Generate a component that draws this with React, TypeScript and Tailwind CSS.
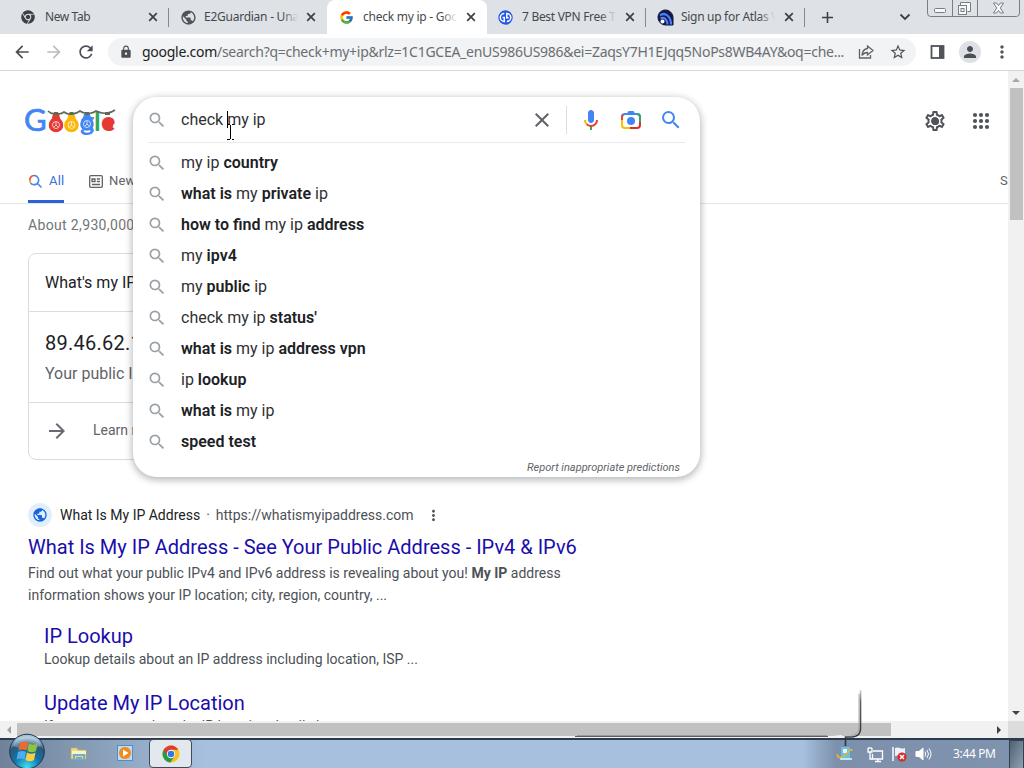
import { ReactNode } from "react";
import { FaChrome } from "react-icons/fa";
import { FcGoogle } from "react-icons/fc";
import {
  MdAdd,
  MdArrowBack,
  MdArrowForward,
  MdLock,
  MdClose,
  MdMoreVert,
  MdOutlineSettings,
  MdPerson,
  MdPublic,
  MdRefresh,
  MdSearch,
  MdStarBorder,
} from "react-icons/md";

type Tab = {
  title: string;
  icon: ReactNode;
  active?: boolean;
  divider?: boolean;
  className: string;
  textClass: string;
};

const VpnIcon = () => (
  <svg width="15" height="15" viewBox="0 0 15 15">
    <circle cx="7.5" cy="7.5" r="7.2" fill="#2457e6" />
    <path
      d="M6.3 3.5a4 4 0 0 0 0 8V7.4H4.6M8.800 11.500a4 4 0 0 0 0-8v4.200h1.800"
      fill="none"
      stroke="#fff"
      strokeWidth="1.5"
    />
  </svg>
);

const AtlasIcon = () => (
  <svg width="17" height="17" viewBox="0 0 17 17">
    <path
      d="M1 8.500C1 4 4.500 1 8.500 1S16 4.500 16 8.500V16H8.500A7.500 7.500 0 0 1 1 8.500z"
      fill="#101a4d"
      stroke="#0c1338"
    />
    <path
      d="M3 6.500c5-4 11 1 11 9M3.500 9.500c4-2 7 1.500 7 6"
      fill="none"
      stroke="#4f7df3"
      strokeWidth="2.200"
    />
    <circle cx="5.500" cy="12.500" r="2" fill="#fff" />
  </svg>
);

const tabs: Tab[] = [
  {
    title: "New Tab",
    icon: <FaChrome size={14} className="text-[#3c4043]" />,
    divider: true,
    className: "w-[169px] pl-[21px]",
    textClass: "tracking-[-0.4px]",
  },
  {
    title: "E2Guardian - Unable",
    icon: <MdPublic size={17} className="text-[#505458]" />,
    className: "w-[158px] pl-[11px]",
    textClass: "tracking-[-0.25px]",
  },
  {
    title: "check my ip - Google",
    icon: <FcGoogle size={15} />,
    active: true,
    className: "w-[160px] pl-3",
    textClass: "tracking-[-0.25px]",
  },
  {
    title: "7 Best VPN Free Trial",
    icon: <VpnIcon />,
    divider: true,
    className: "w-[159px] pl-[11px]",
    textClass: "tracking-[-0.3px]",
  },
  {
    title: "Sign up for Atlas VPN",
    icon: <AtlasIcon />,
    divider: true,
    className: "w-[159px] pl-[11px]",
    textClass: "tracking-[-0.3px]",
  },
];

const TabStrip = () => (
  <div className="relative flex h-[34px] shrink-0 bg-[#dee1e6] font-['Noto_Sans','Open_Sans',sans-serif] text-[12px] text-[#45494d]">
    {tabs.map((tab) => (
      <div
        key={tab.title}
        className={`relative flex shrink-0 items-center ${tab.className} ${
          tab.active ? "rounded-t-lg bg-white" : ""
        }`}
      >
        <span className="flex w-[17px] shrink-0 justify-start">{tab.icon}</span>
        <span
          className={`relative ml-[7px] w-[94px] overflow-hidden whitespace-nowrap ${tab.textClass}`}
        >
          {tab.title}
          <span
            className={`absolute inset-y-0 right-0 w-4 bg-linear-to-r from-transparent ${
              tab.active ? "to-white" : "to-[#dee1e6]"
            }`}
          />
        </span>
        <svg
          width="10"
          height="10"
          viewBox="0 0 10 10"
          className="absolute right-[11px]"
        >
          <path
            d="M1.200 1.200l7.600 7.600M8.800 1.200 1.200 8.800"
            stroke="#3c4043"
            strokeWidth="1.700"
          />
        </svg>
        {tab.divider && (
          <span className="absolute right-0 top-2 h-[19px] w-px bg-[#85898e]" />
        )}
      </div>
    ))}
    <div className="flex w-[45px] items-center justify-center">
      <MdAdd size={19} className="text-[#3c4043]" />
    </div>
    <svg
      width="12"
      height="8"
      viewBox="0 0 12 8"
      className="ml-[49px] mt-[13px]"
    >
      <path
        d="M1.500 1.500 6 6l4.500-4.500"
        fill="none"
        stroke="#3c4043"
        strokeWidth="1.800"
      />
    </svg>
    <svg
      width="93"
      height="17"
      viewBox="0 0 93 17"
      fill="none"
      stroke="#797e85"
      className="absolute right-[4px] top-0"
    >
      <path d="M.5 0v13q0 3.500 3 3.500h86q3 0 3-3.500V0M25.500 0v16M50.500 0v16" />
      <rect x="7.500" y="8.500" width="11" height="4" rx="1" fill="#f7f8f9" />
      <path d="M33.500 5.500v-3h10v9h-3" fill="#f7f8f9" />
      <rect x="31.500" y="5.500" width="8" height="9" fill="#f7f8f9" />
      <rect x="34" y="8.500" width="3" height="3" />
      <path
        d="M66.500 3h3l2 2.500L73.500 3h3l-3.200 5 3.200 5h-3l-2-2.500-2 2.500h-3l3.200-5z"
        fill="#f7f8f9"
      />
    </svg>
  </div>
);

const Toolbar = () => (
  <div className="flex h-[37px] shrink-0 items-center border-b border-[#d6d8da] bg-white">
    <MdArrowBack size={20} className="ml-3 shrink-0 text-[#4b4f54]" />
    <MdArrowForward size={20} className="ml-3 shrink-0 text-[#babcbe]" />
    <MdRefresh size={20} className="ml-3 shrink-0 text-[#4b4f54]" />
    <div className="ml-3 flex h-7 w-[808px] shrink-0 items-center rounded-full bg-[#f1f3f4]">
      <MdLock size={14} className="ml-[11px] shrink-0 text-[#4b4f54]" />
      <div className="-mt-px ml-[9px] w-[706px] shrink-0 whitespace-nowrap font-['Noto_Sans','Open_Sans',sans-serif] text-[14px] tracking-[-0.27px] text-[#6a6e73]">
        <span className="text-[#202124]">google.com</span>
        /search?q=check+my+ip&amp;rlz=1C1GCEA_enUS986US986&amp;ei=ZaqsY7H1EJqq5NoPs8WB4AY&amp;oq=che...
      </div>
      <svg
        width="16"
        height="16"
        viewBox="0 0 16 16"
        fill="none"
        stroke="#5f6368"
        strokeWidth="1.300"
        className="ml-[10px] shrink-0"
      >
        <path d="M1.500 5v9h11v-3" />
        <path d="M9.500 2 15 6.500 9.500 11V8.500C7 8.500 5.500 9 4 11.500 4.200 7.500 6 5 9.500 4.500z" />
      </svg>
      <MdStarBorder size={18} className="ml-[15px] shrink-0 text-[#505458]" />
    </div>
    <svg
      width="16"
      height="14"
      viewBox="0 0 16 14"
      className="ml-[14px] shrink-0 text-[#505458]"
    >
      <rect
        x="1.500"
        y="1"
        width="12"
        height="12"
        fill="none"
        stroke="currentColor"
        strokeWidth="1.800"
      />
      <path d="M9 1h5v12H9z" fill="currentColor" />
    </svg>
    <div className="ml-[13px] flex size-[22px] shrink-0 items-center justify-center rounded-full bg-[#dde0e4]">
      <MdPerson size={18} className="text-[#4b4f54]" />
    </div>
    <MdMoreVert size={20} className="ml-[11px] shrink-0 text-[#505458]" />
  </div>
);

// Holiday logo: light bulbs hang over the round letters
const GoogleLogo = () => (
  <svg
    width="94"
    height="34"
    viewBox="0 0 94 34"
    className="font-['Lato',sans-serif]"
  >
    <g fill="#e53935">
      <circle cx="32" cy="20" r="7.200" />
      <path d="M29 9h6l1.500 6h-9z" />
    </g>
    <g fill="#fbb70b">
      <circle cx="47.500" cy="20" r="7.200" />
      <path d="M44.500 9h6l1.500 6h-9z" />
    </g>
    <g fill="#4285f4">
      <circle cx="63" cy="19" r="6.800" />
      <path d="M60 9h6l1.500 6h-9z" />
    </g>
    <circle cx="84" cy="19" r="5.500" fill="#e53935" />
    <g fontSize="27" fontWeight="700">
      <text x="0" y="26" fontSize="31" fontWeight="400" fill="#4285f4" stroke="#4285f4" strokeWidth="0.700">
        G
      </text>
      <text x="24.200" y="26.500" fill="#e53935">
        o
      </text>
      <text x="39.700" y="26.500" fill="#fbb70b">
        o
      </text>
      <text x="56" y="26" fill="#4285f4">
        g
      </text>
      <text x="70" y="26" fill="#34a853">
        l
      </text>
      <text x="77" y="26" fill="#e53935">
        e
      </text>
    </g>
    <g fill="none" stroke="#fff" strokeOpacity="0.700">
      <circle cx="32" cy="20" r="3.500" />
      <circle cx="47.500" cy="20" r="3.500" />
      <circle cx="63" cy="19" r="3.500" />
      <path d="M32 17v3l-2 2M32 20l2 2M47.500 17v3l-2 2M47.500 20l2 2M63 16v3l-2 2M63 19l2 2" />
    </g>
    <path
      d="M24 6q4 4 8 2q4 2 8-1q4 3 8 2q4 0 8-3q4 3 8 2q4 1 8-2q6 3 11 2q4 0 8-3"
      fill="none"
      stroke="#5c6b57"
      strokeWidth="1.700"
    />
    <path
      d="M30 7h4v3h-4zM45.500 7h4v3h-4zM61 7h4v3h-4zM81 7h5v3h-5z"
      fill="#5c6b57"
    />
  </svg>
);

const ResultHeader = () => (
  <div className="flex h-[98px] shrink-0 items-start">
    <div className="ml-6 mt-[34px]">
      <GoogleLogo />
    </div>
    <div className="relative ml-auto mr-[18px] mt-[38px] flex items-center gap-[25px] text-[#505458]">
      <span className="relative flex size-6 items-center justify-center">
        <MdOutlineSettings size={24} />
        <span className="absolute size-[7px] rounded-full bg-[#505458]" />
      </span>
      <svg width="18" height="18" viewBox="0 0 18 18" fill="currentColor">
        {[3, 9, 15].map((y) =>
          [3, 9, 15].map((x) => <circle key={`${x}${y}`} cx={x} cy={y} r="2.100" />)
        )}
      </svg>
    </div>
  </div>
);

const ResultTabs = () => (
  <div className="flex h-[35px] shrink-0 border-b border-[#e4e6e8] text-[13px] text-[#5f6368]">
    <div className="ml-7 flex w-9 shrink-0 border-b-[3px] border-[#2a63d4] pt-px text-[#3b70d8]">
      <svg
        width="15"
        height="15"
        viewBox="0 0 15 15"
        fill="none"
        strokeWidth="1.600"
        className="mt-[4px] shrink-0"
      >
        <path d="M2.500 8.500A4.500 4.500 0 0 1 6 1.500" stroke="#ea4335" />
        <path d="M2.500 8.500A4.500 4.500 0 0 1 1.500 6" stroke="#fbbc04" />
        <path d="M6 1.500a4.600 4.600 0 1 1-3.500 7.500M9.500 9.500l4 4" stroke="#4285f4" />
      </svg>
      <span className="ml-[6px] leading-[21px] tracking-[0.2px]">All</span>
    </div>
    <div className="ml-[25px] flex">
      <svg
        width="14"
        height="13"
        viewBox="0 0 14 13"
        fill="none"
        stroke="currentColor"
        strokeWidth="1.300"
        className="mt-[6px]"
      >
        <rect x=".7" y=".7" width="12.600" height="11.600" rx="1" />
        <path d="M3 4h3v2.500H3zM7.800 4H11M7.800 6.500H11M3 9.500h8" />
      </svg>
      <span className="ml-[6px] mt-px leading-[22px] tracking-[0.2px]">News</span>
    </div>
    <span className="ml-auto w-[8px] overflow-hidden whitespace-nowrap leading-[23px]">
      SafeSearch
    </span>
  </div>
);

const IpCard = () => (
  <div className="ml-7 flex h-[207px] w-[652px] shrink-0 flex-col rounded-lg border border-[#dadce0] text-[#202124]">
    <div className="flex h-[58px] items-center border-b border-[#dadce0] pl-4 text-[16px]">
      What's my IP
    </div>
    <div className="h-[91px] border-b border-[#dadce0] pl-4 pt-[17px]">
      <div className="text-[20px] leading-7 tracking-[0.25px]">89.46.62.154</div>
      <div className="mt-[5px] text-[16px] leading-6 text-[#5f6368]">
        Your public IP address
      </div>
    </div>
    <div className="flex grow items-center pl-4 text-[14px] text-[#5f6368]">
      <MdArrowForward size={24} className="text-[#676b70]" />
      <span className="-mt-px ml-6 text-[14px]">Learn more about IP addresses</span>
    </div>
  </div>
);

const SearchResult = () => (
  <div className="ml-7 mt-[43px] shrink-0 text-[14px] text-[#4d5156]">
    <div className="flex h-6 items-center">
      <span className="flex size-6 items-center justify-center rounded-full bg-[#e1effc]">
        <MdPublic size={16} className="text-[#1565e0]" />
      </span>
      <span className="ml-2 text-[#202124]">What Is My IP Address</span>
      <span className="mx-[6px]">·</span>
      <span>https://whatismyipaddress.com</span>
      <MdMoreVert size={17} className="ml-[11px]" />
    </div>
    <div className="mt-[7px] text-[20px] leading-[26px] text-[#1a0dab]">
      What Is My IP Address - See Your Public Address - IPv4 &amp; IPv6
    </div>
    <div className="mt-[2px] leading-[22px]">
      Find out what your public IPv4 and IPv6 address is revealing about you!{" "}
      <b>My IP</b> address
      <br />
      information shows your IP location; city, region, country, ...
    </div>
    <div className="ml-4 mt-[17px] text-[20px] leading-[26px] text-[#1a0dab]">
      IP Lookup
    </div>
    <div className="-mt-px ml-4 leading-[22px]">
      Lookup details about an IP address including location, ISP ...
    </div>
    <div className="ml-4 mt-[20px] text-[20px] leading-[26px] text-[#1a0dab]">
      Update My IP Location
    </div>
    <div className="-mt-px ml-4 leading-[22px]">
      If you want to update the IP location details here ...
    </div>
  </div>
);

// Parts between asterisks are the completed words
const suggestions = [
  "my ip *country*",
  "*what is* my *private* ip",
  "*how to find* my ip *address*",
  "my *ipv4*",
  "my *public* ip",
  "check my ip *status'*",
  "*what is* my ip *address vpn*",
  "ip *lookup*",
  "*what is* my ip",
  "*speed test*",
];

const SearchPopup = () => (
  <div className="absolute left-[133px] top-[26px] flex h-[380px] w-[567px] flex-col rounded-3xl bg-white text-[16px] text-[#303134] shadow-[0_2px_7px_1px_rgba(32,33,36,0.32)]">
    <div className="mx-[15px] flex h-[46px] shrink-0 items-center border-b border-[#e8eaed]">
      <MdSearch size={20} className="-ml-px text-[#9aa0a6]" />
      <span className="relative ml-[14px]">
        check my ip
        <span className="absolute left-[46px] top-[3px] h-[17px] w-px bg-black" />
      </span>
      <MdClose size={24} className="ml-auto text-[#5f6368]" />
      <span className="ml-3 h-7 w-px bg-[#dadce0]" />
      <svg width="24" height="24" viewBox="0 0 24 24" className="ml-3">
        <path
          fill="#4285f4"
          d="m12 15c1.660 0 3-1.310 3-2.970v-7.020c0-1.660-1.340-3.010-3-3.010s-3 1.340-3 3.010v7.020c0 1.660 1.340 2.970 3 2.970z"
        />
        <path fill="#34a853" d="m11 18.080h2v3.920h-2z" />
        <path
          fill="#fbbc04"
          d="m7.050 16.870c-1.270-1.330-2.050-2.830-2.050-4.870h2c0 1.450.56 2.420 1.470 3.380v.32l-1.150 1.180z"
        />
        <path
          fill="#ea4335"
          d="m12 16.930a4.970 5.250 0 0 1-3.540-1.550l-1.410 1.490c1.260 1.340 3.020 2.130 4.950 2.130 3.870 0 6.990-2.920 6.990-7h-1.990c0 2.920-2.240 4.930-5 4.930z"
        />
      </svg>
      <svg
        width="24"
        height="24"
        viewBox="0 0 24 24"
        fill="none"
        strokeWidth="2"
        className="ml-4"
      >
        <path d="M3 13V9q0-3 3-3h12q3 0 3 3v3" stroke="#4285f4" />
        <path d="M8 5.500 9.500 3h5L16 5.500z" fill="#4285f4" />
        <path d="M3 12v5q0 3 3 3h6" stroke="#fbbc04" />
        <path d="M3 12V9q0-1.500 1-2.300" stroke="#ea4335" />
        <path d="M11 20h7q3 0 3-3v-3" stroke="#d93025" />
        <path d="M18.500 6Q21 6.500 21 9v5" stroke="#34a853" />
        <circle cx="12" cy="13" r="4" fill="#4285f4" />
      </svg>
      <MdSearch size={24} className="ml-4 mr-[2px] text-[#4285f4]" />
    </div>
    <ul className="mt-[4px]">
      {suggestions.map((s) => (
        <li key={s} className="flex h-[31px] items-center whitespace-pre">
          <MdSearch size={20} className="ml-[14px] mr-[14px] text-[#9aa0a6]" />
          <span>
            {s.split("*").map((part, i) =>
              i % 2 ? (
                <b key={i} className="font-semibold text-[#202124]">
                  {part}
                </b>
              ) : (
                part
              )
            )}
          </span>
        </li>
      ))}
    </ul>
    <div className="mr-5 mt-[3px] text-right text-[11px] italic leading-4 text-[#5f6368]">
      Report inappropriate predictions
    </div>
  </div>
);

const VerticalScroll = () => (
  <div className="flex w-4 shrink-0 flex-col items-center bg-[#f1f1f1]">
    <div className="flex h-[17px] items-center">
      <span className="border-x-[4px] border-b-[4px] border-x-transparent border-b-[#a3a3a3]" />
    </div>
    <div className="h-[132px] w-[13px] bg-[#c1c1c1]" />
    <div className="mt-auto flex h-[17px] items-center">
      <span className="border-x-[4px] border-t-[4px] border-x-transparent border-t-[#404040]" />
    </div>
  </div>
);

const HorizontalScroll = () => (
  <div className="flex h-[17px] shrink-0 items-center bg-[#f1f1f1]">
    <div className="flex w-[17px] justify-center">
      <span className="border-y-[4px] border-r-[4px] border-y-transparent border-r-[#a3a3a3]" />
    </div>
    <div className="h-[13px] w-[874px] bg-[#c1c1c1]" />
    <span className="ml-auto mr-[7px] border-y-[4px] border-l-[4px] border-y-transparent border-l-[#404040]" />
    <div className="h-full w-4 bg-[#dcdcdc]" />
  </div>
);

// Leftover edge of the tray notification balloon
const BalloonShadow = () => (
  <svg
    width="300"
    height="60"
    viewBox="0 0 300 60"
    fill="none"
    className="absolute left-[570px] top-[686px]"
  >
    <defs>
      <linearGradient id="edge" x1="0" y1="0" x2="0" y2="1">
        <stop offset="0" stopColor="#303236" stopOpacity="0.2" />
        <stop offset="0.2" stopColor="#303236" stopOpacity="0.800" />
        <stop offset="1" stopColor="#303236" />
      </linearGradient>
    </defs>
    <path d="M258 51q2-1 14-2v2z" fill="#f1f1f1" />
    <path d="M290.500 4v39q0 7-8 8h-7v13" stroke="url(#edge)" strokeWidth="1.600" />
    <path d="M289 8v33q0 7-8 8.500" stroke="#a8a8a8" />
    <path d="M7 49.500h250" stroke="#9a9a9a" />
    <path d="M5 50.500h253" stroke="#5d5d5d" />
  </svg>
);

const StartButton = () => (
  <svg width="37" height="35" viewBox="0 0 37 35" className="-mt-[7px] ml-2 shrink-0">
    <defs>
      <radialGradient id="orb" cx="50%" cy="95%" r="85%">
        <stop offset="0" stopColor="#3de0f5" />
        <stop offset="0.45" stopColor="#1474a8" />
        <stop offset="0.8" stopColor="#2c5878" />
        <stop offset="1" stopColor="#9fc0d4" />
      </radialGradient>
    </defs>
    <circle cx="19" cy="18.500" r="17.300" fill="url(#orb)" stroke="#173754" />
    <path d="M5 13C9 0 29 0 33 13Q19 19 5 13z" fill="#fff" fillOpacity="0.250" />
    <path d="M12.500 10q4-2.500 7.500 0l-1.500 7.500q-4-2-8 0z" fill="#ef6a2a" />
    <path d="M21 10.500q4 2.500 8.500 0L28 18q-4 2.500-8.500 0z" fill="#8cc63e" />
    <path d="M10 19q4-2 8 0l-1.500 7.500q-4-2-8 0z" fill="#4aaef0" />
    <path d="M19 19.500q4 2.500 8.500 0L26 27q-4 2.500-8.500 0z" fill="#fbd03c" />
  </svg>
);

const ChromeLogo = () => (
  <svg width="18" height="18" viewBox="0 0 18 18">
    <circle cx="9" cy="9" r="8.500" fill="#fbc116" />
    <path d="M9 9 1.640 4.750A8.500 8.500 0 0 0 8.500 17.500L12.600 11z" fill="#259b4a" />
    <path d="M1.640 4.750a8.500 8.500 0 0 1 14.720 0H9L5.400 11z" fill="#dc3d30" />
    <circle cx="9" cy="9" r="4.200" fill="#fff" />
    <circle cx="9" cy="9" r="3.300" fill="#3478e5" />
  </svg>
);

const Taskbar = () => (
  <div className="flex h-[30px] shrink-0 border-t-2 border-[#2a3b50] bg-linear-to-r from-[#6f8299] via-[#a6c0dd] via-20% to-[#a6c0dd]">
    <StartButton />
    <svg width="18" height="16" viewBox="0 0 18 16" className="ml-[25px] mt-[6px]">
      <path d="M1 2h6l1 2h8v9H1z" fill="#ead98a" stroke="#c2ad5c" strokeWidth=".6" />
      <path d="M2 5h14v3H2z" fill="#fbf4c4" />
      <path d="M4 14V9h10v5M7 14v-2h4v2" fill="none" stroke="#70aed0" strokeWidth="2" />
    </svg>
    <svg width="16" height="16" viewBox="0 0 16 16" className="ml-[29px] mt-[5px]">
      <rect x=".5" y=".5" width="15" height="15" fill="#bfdaf2" stroke="#4c8fcf" />
      <circle cx="8" cy="8" r="6" fill="#f18a17" />
      <path d="M6 4.500v7L11.500 8z" fill="#fff" />
    </svg>
    <div className="-mt-px ml-4 flex h-[29px] w-[43px] items-center justify-center rounded-sm border border-[#3d4a59] bg-[#e2e8ee]">
      <ChromeLogo />
    </div>
    <div className="ml-auto flex w-[221px] items-start bg-linear-to-r from-[#a6c0dd] via-[#7c90ac] via-15% to-[#8093ae]">
      <svg width="18" height="16" viewBox="0 0 18 16" className="ml-[33px] mt-[6px]">
        <rect x="5" y="1" width="9" height="13" fill="#65c2e9" />
        <rect x="7" y="3" width="4" height="4" fill="#e8f7fd" />
        <path d="M1 8q1 5 6 3l6-6q3-3 3 0" fill="none" stroke="#e5b33e" strokeWidth="1.700" />
        <path d="M4 13h12" stroke="#e4f2f7" strokeWidth="1.500" />
      </svg>
      <svg
        width="17"
        height="16"
        viewBox="0 0 17 16"
        fill="none"
        stroke="#fff"
        strokeWidth="1.300"
        className="ml-[13px] mt-[7px]"
      >
        <path d="M6 4h9.500v8H5.500V7M8 14.500h6M11 12v2" />
        <path d="M1 1v4h4V1M3 5v7h2M2 0v2M4 0v2" />
      </svg>
      <svg width="17" height="16" viewBox="0 0 17 16" className="ml-[7px] mt-[6px]">
        <path d="M2 1v14" stroke="#fff" strokeWidth="1.500" />
        <path d="M4 2q3-1 5 0t5 0v8q-3 1-5 0t-5 0z" fill="#eef1f5" />
        <circle cx="11" cy="11" r="4.600" fill="#d62b2b" />
        <path d="m9 9 4 4m0-4-4 4" stroke="#fff" strokeWidth="1.500" />
      </svg>
      <svg
        width="17"
        height="16"
        viewBox="0 0 17 16"
        fill="none"
        stroke="#fff"
        className="ml-[7px] mt-[6px]"
      >
        <path d="M1 5.500h3L8 2v12l-4-3.500H1z" fill="#fff" />
        <path d="M10 5.500q1.500 2.500 0 5M12 4q3 4 0 8M14 2.500q4 5.500 0 11" />
      </svg>
      <span className="ml-[21px] mt-[5px] whitespace-nowrap font-['Noto_Sans','Open_Sans',sans-serif] text-[12px] leading-[18px] tracking-[-0.35px] text-white">
        3:44 PM
      </span>
      <div className="ml-auto h-[29px] w-[15px] border border-[#33404f] bg-linear-to-br from-[#526274] to-[#8fa1b5]" />
    </div>
  </div>
);

const TextCursor = () => (
  <svg
    width="9"
    height="16"
    viewBox="0 0 9 16"
    fill="none"
    stroke="#000"
    className="absolute left-[226px] top-[124px]"
    shapeRendering="crispEdges"
  >
    <path d="M1 .5h2.500M5.500.5H8M4.500 1v14M1 15.500h2.500M5.500 15.500H8" />
  </svg>
);

const App: React.FC = () => {
  return (
    <div className="relative flex h-[768px] w-[1024px] flex-col overflow-hidden bg-white font-['Roboto',sans-serif]">
      <TabStrip />
      <Toolbar />
      <div className="flex h-[650px] shrink-0">
        <div className="relative flex w-[1008px] shrink-0 flex-col overflow-hidden">
          <ResultHeader />
          <ResultTabs />
          <div className="ml-7 h-[49px] shrink-0 pt-[10px] text-[14px] leading-[22px] tracking-[0.35px] text-[#70757a]">
            About 2,930,000,000 results (0.45 seconds)
          </div>
          <IpCard />
          <SearchResult />
          <SearchPopup />
        </div>
        <VerticalScroll />
      </div>
      <HorizontalScroll />
      <Taskbar />
      <BalloonShadow />
      <TextCursor />
    </div>
  );
};

export default App;
